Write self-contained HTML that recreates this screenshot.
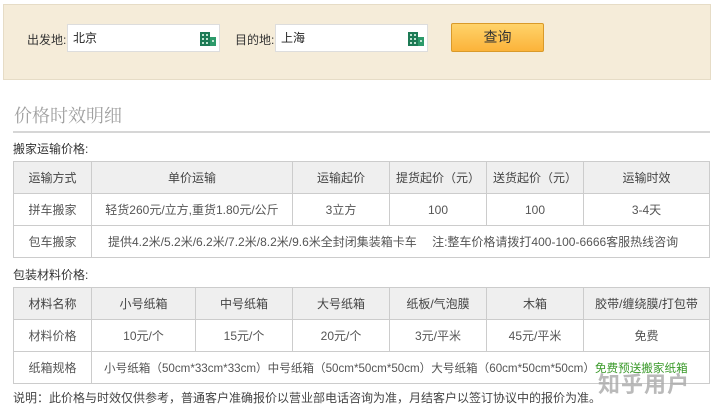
<!DOCTYPE html>
<html><head><meta charset="utf-8"><style>
body{margin:0;width:720px;height:413px;background:#fff;font-family:"Liberation Sans","Noto Sans CJK SC",sans-serif;font-size:12px;color:#333;position:relative;overflow:hidden}
.box{position:absolute;left:3px;top:4px;width:706px;height:74px;background:#f5ecd9;border:1px solid #e6dcc6}
.lbl{position:absolute;top:31px;font-size:12px;color:#333}
.inp{position:absolute;top:24px;width:153px;height:28px;background:#fff;border:1px solid #ddd;box-sizing:border-box;padding-left:5px;line-height:27px;font-size:12px;color:#222}
.ico{position:absolute;right:3px;top:7px;width:16px;height:14px}
.btn{position:absolute;left:451px;top:23px;width:93px;height:29px;box-sizing:border-box;border:1px solid #d99a2a;border-radius:2px;background:linear-gradient(#ffd36a,#fbb33a);text-align:center;line-height:27px;font-size:14px;color:#333}
.title{position:absolute;left:14px;top:102px;font-family:"Liberation Serif","Noto Serif CJK SC",serif;font-size:18px;color:#a0a0a0}
.hr{position:absolute;left:13px;top:131px;width:697px;height:2px;background:#d6d6d6}
.sub{position:absolute;left:13px;font-size:12px;color:#333}
table{position:absolute;left:13px;width:697px;border-collapse:collapse;table-layout:fixed}
td{border:1px solid #ccc;text-align:center;color:#555;font-size:12px;height:31px;padding:0;white-space:nowrap;overflow:hidden}
tr.h td{background:#efefef;color:#444}
.l{text-align:left;padding-left:12px}
.wm{position:absolute;left:598px;top:367px;font-size:22px;color:#aaa;font-weight:bold;letter-spacing:1px;opacity:.8}
</style></head><body>
<div class="box"></div>
<div class="lbl" style="left:27px">出发地:</div>
<div class="inp" style="left:67px">北京<svg class="ico" viewBox="0 0 16 14"><rect x="0" y="0" width="10" height="14" fill="#1d7a55"/><rect x="10" y="5" width="6" height="9" fill="#2c9a6a"/><g fill="#bfe3d0"><rect x="2" y="2" width="2" height="2"/><rect x="6" y="2" width="2" height="2"/><rect x="2" y="6" width="2" height="2"/><rect x="6" y="6" width="2" height="2"/><rect x="2" y="10" width="2" height="2"/><rect x="6" y="10" width="2" height="2"/><rect x="12" y="8" width="2" height="2"/></g></svg></div>
<div class="lbl" style="left:235px">目的地:</div>
<div class="inp" style="left:275px">上海<svg class="ico" viewBox="0 0 16 14"><rect x="0" y="0" width="10" height="14" fill="#1d7a55"/><rect x="10" y="5" width="6" height="9" fill="#2c9a6a"/><g fill="#bfe3d0"><rect x="2" y="2" width="2" height="2"/><rect x="6" y="2" width="2" height="2"/><rect x="2" y="6" width="2" height="2"/><rect x="6" y="6" width="2" height="2"/><rect x="2" y="10" width="2" height="2"/><rect x="6" y="10" width="2" height="2"/><rect x="12" y="8" width="2" height="2"/></g></svg></div>
<div class="btn">查询</div>
<div class="title">价格时效明细</div>
<div class="hr"></div>
<div class="sub" style="top:140px">搬家运输价格:</div>
<table style="top:161px">
<colgroup><col style="width:78px"><col style="width:201px"><col style="width:97px"><col style="width:97px"><col style="width:97px"><col></colgroup>
<tr class="h"><td>运输方式</td><td>单价运输</td><td>运输起价</td><td>提货起价（元）</td><td>送货起价（元）</td><td>运输时效</td></tr>
<tr><td>拼车搬家</td><td>轻货260元/立方,重货1.80元/公斤</td><td>3立方</td><td>100</td><td>100</td><td>3-4天</td></tr>
<tr><td>包车搬家</td><td colspan="5" class="l" style="padding-left:16px">提供4.2米/5.2米/6.2米/7.2米/8.2米/9.6米全封闭集装箱卡车　 注:整车价格请拨打400-100-6666客服热线咨询</td></tr>
</table>
<div class="sub" style="top:266px">包装材料价格:</div>
<table style="top:287px">
<colgroup><col style="width:78px"><col style="width:104px"><col style="width:97px"><col style="width:97px"><col style="width:97px"><col style="width:97px"><col></colgroup>
<tr class="h"><td>材料名称</td><td>小号纸箱</td><td>中号纸箱</td><td>大号纸箱</td><td>纸板/气泡膜</td><td>木箱</td><td>胶带/缠绕膜/打包带</td></tr>
<tr><td>材料价格</td><td>10元/个</td><td>15元/个</td><td>20元/个</td><td>3元/平米</td><td>45元/平米</td><td>免费</td></tr>
<tr><td>纸箱规格</td><td colspan="6" class="l" style="font-size:11.6px">小号纸箱（50cm*33cm*33cm）中号纸箱（50cm*50cm*50cm）大号纸箱（60cm*50cm*50cm）<span style="color:#3a9a2a">免费预送搬家纸箱</span></td></tr>
</table>
<div class="sub" style="top:389px;color:#444">说明：此价格与时效仅供参考，普通客户准确报价以营业部电话咨询为准，月结客户以签订协议中的报价为准。</div>
<div class="wm">知乎用户</div>
</body></html>
